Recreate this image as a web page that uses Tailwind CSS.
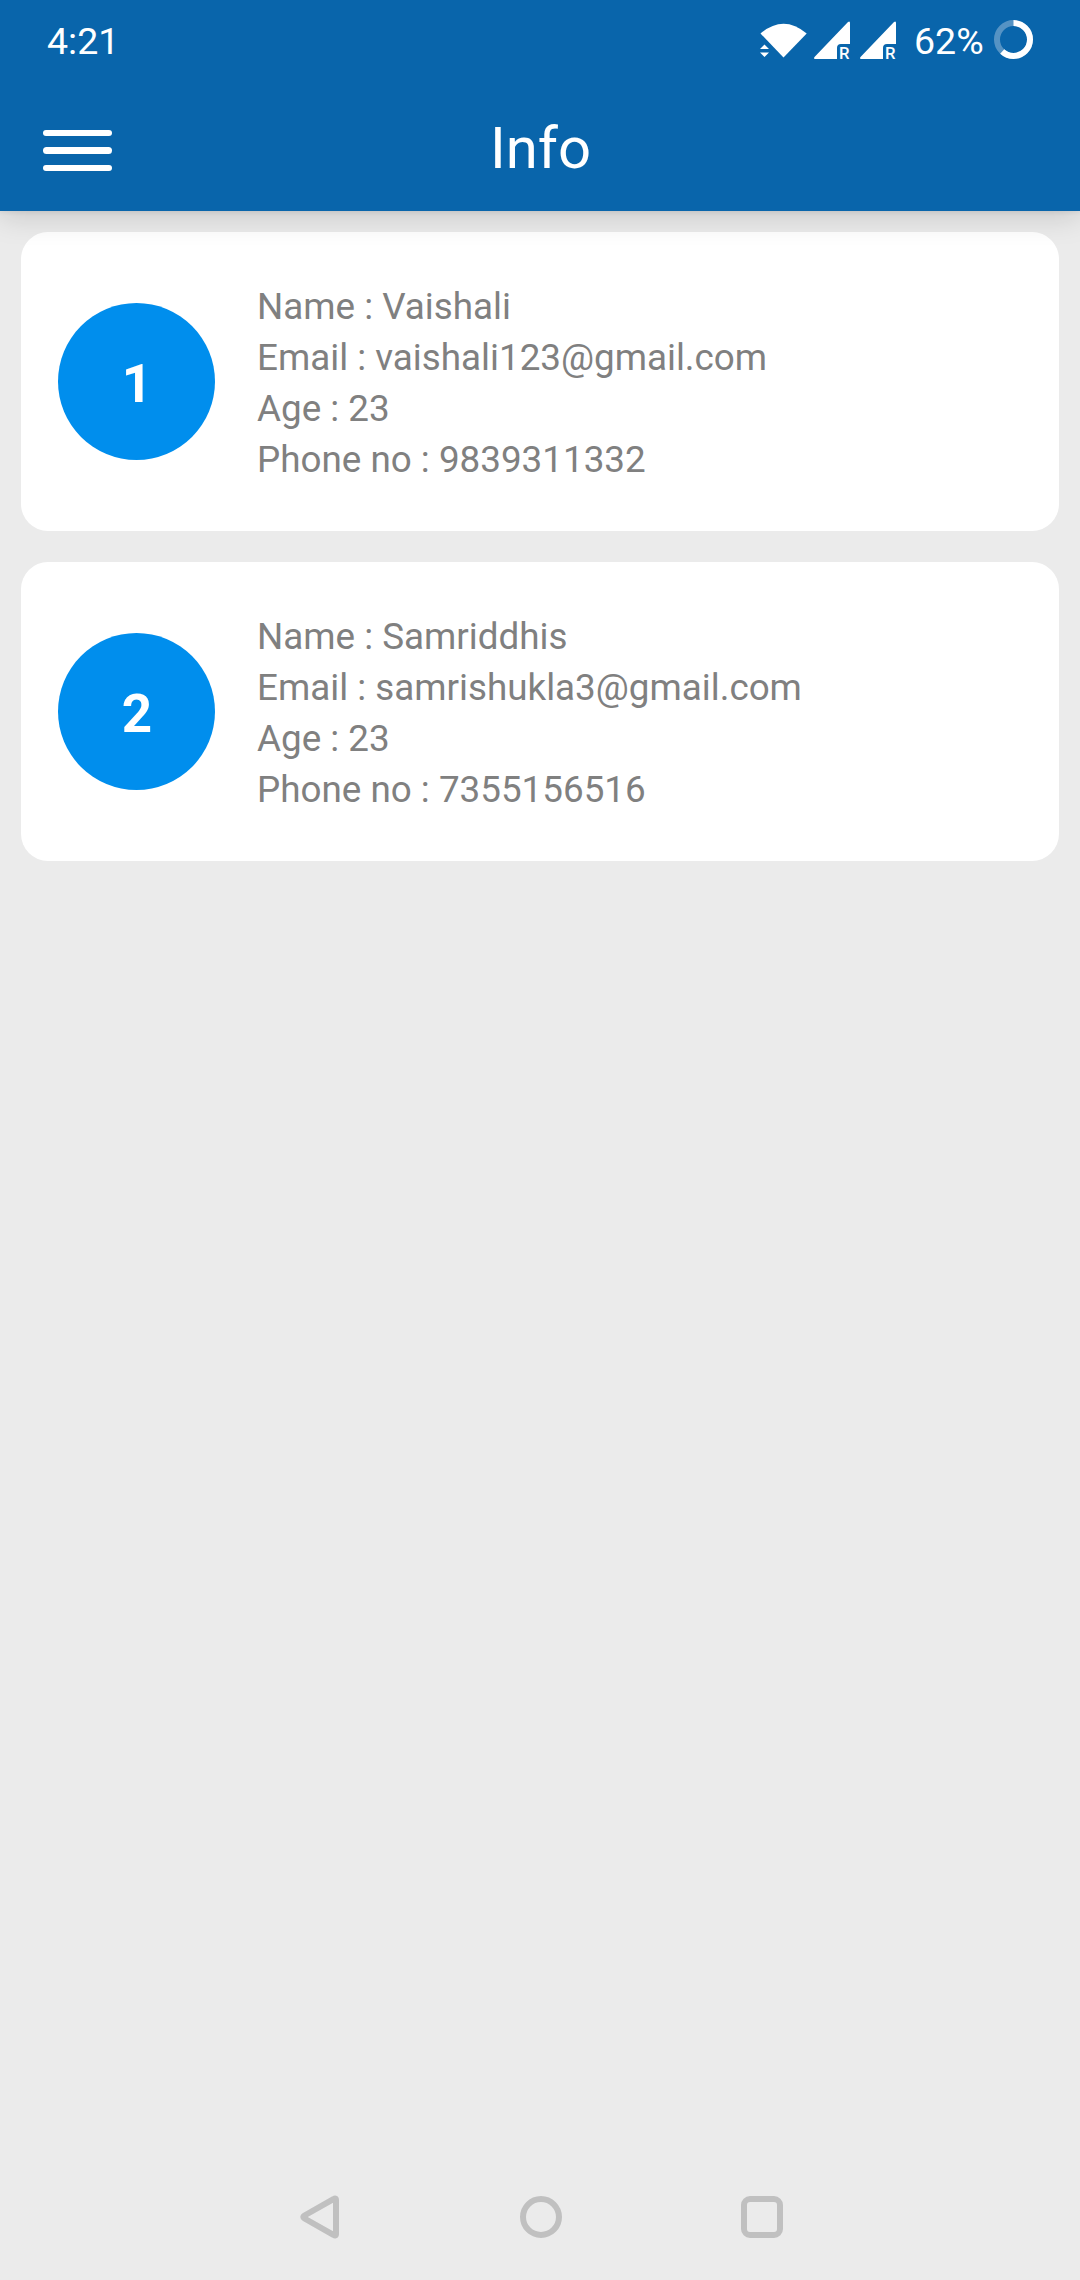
<!DOCTYPE html>
<html lang="en">
<head>
<meta charset="utf-8">
<title>Info</title>
<script src="https://cdn.jsdelivr.net/npm/@tailwindcss/browser@4"></script>
</head>
<body class="flex h-[2280px] w-[1080px] flex-col overflow-hidden bg-[#ebebeb] font-[Roboto,sans-serif]">
  <header class="relative z-10 flex h-[211px] shrink-0 flex-col bg-[#0965ab] text-white shadow-[0_1px_5px_rgba(0,0,0,0.08),0_6px_28px_rgba(0,0,0,0.15)]">
    <!-- Status bar -->
    <div class="flex h-20 justify-between pl-[47px] pr-[47px]">
      <span class="pt-[19px] text-[37.500px] leading-[45px]">4:21</span>
      <div class="flex">
        <svg class="h-20 w-[154px]" viewBox="760 0 154 80" fill="#fff">
          <path d="M760.500 33.500Q783.500 14 806.700 33.500L783.500 57.500Z"/>
          <path d="M760 49L764.500 44.500L769 49ZM760 52.500H769L764.500 57Z"/>
          <path d="M814.500 59Q813.500 58 814.500 57L848 22Q850 20.500 850 23V44H841Q837 44 837 48V59Z"/>
          <path d="M860.500 59Q859.500 58 860.500 57L894 22Q896 20.500 896 23V44H887Q883 44 883 48V59Z"/>
          <text x="839" y="58.700" font-family="Roboto" font-size="17" font-weight="500" textLength="10.500" lengthAdjust="spacingAndGlyphs">R</text>
          <text x="885" y="58.700" font-family="Roboto" font-size="17" font-weight="500" textLength="10.500" lengthAdjust="spacingAndGlyphs">R</text>
        </svg>
        <span class="w-[80px] pt-[19px] text-[37.500px] leading-[45px]">62%</span>
        <svg class="h-20 w-[39px]" viewBox="994 0 39 80" fill="none" stroke-width="6">
          <circle cx="1013.500" cy="39.500" r="16.500" stroke="#5593c4"/>
          <circle cx="1013.500" cy="39.500" r="16.500" stroke="#fff" pathLength="100" stroke-dasharray="62 38" transform="rotate(-90 1013.5 39.5)"/>
        </svg>
      </div>
    </div>
    <!-- App bar -->
    <div class="grid h-[131px] grid-cols-[1fr_auto_1fr] px-[43px]">
      <div class="flex flex-col gap-[11px] pt-[50px]">
        <span class="h-[6.300px] w-[69px] rounded-full bg-white"></span>
        <span class="h-[6.300px] w-[69px] rounded-full bg-white"></span>
        <span class="h-[6.300px] w-[69px] rounded-full bg-white"></span>
      </div>
      <h1 class="pl-px pt-[33px] text-[58px] leading-[70px]">Info</h1>
    </div>
  </header>

  <main class="flex flex-1 flex-col gap-[31px] px-[21px] pt-[21px]">
    <article class="flex h-[299px] items-center rounded-[27px] bg-white pl-[37px]">
      <div class="flex size-[157px] items-center justify-center rounded-full bg-[#008eed] pl-px pt-[5px] text-[53px] font-bold leading-none text-white">1</div>
      <div class="ml-[42px] pt-[2px] text-[36.800px] leading-[51px] text-[#808080]">
        <p>Name : Vaishali</p>
        <p>Email : vaishali123@gmail.com</p>
        <p>Age : 23</p>
        <p>Phone no : 9839311332</p>
      </div>
    </article>
    <article class="flex h-[299px] items-center rounded-[27px] bg-white pl-[37px]">
      <div class="flex size-[157px] items-center justify-center rounded-full bg-[#008eed] pl-px pt-[5px] text-[53px] font-bold leading-none text-white">2</div>
      <div class="ml-[42px] pt-[2px] text-[36.800px] leading-[51px] text-[#808080]">
        <p>Name : Samriddhis</p>
        <p>Email : samrishukla3@gmail.com</p>
        <p>Age : 23</p>
        <p>Phone no : 7355156516</p>
      </div>
    </article>
  </main>

  <!-- System navigation -->
  <nav class="flex h-[126px] items-center justify-center gap-[177.500px] pl-[3px]">
    <svg class="h-[44px] w-[42px]" viewBox="299 2195 42 44" fill="none" stroke="#c0c0c0" stroke-width="6" stroke-linejoin="round"><path d="M333.400 2199.200Q336 2197.500 336 2200V2234Q336 2236.500 333.400 2234.800L304.500 2218.500Q302 2217 304.500 2215.500Z"/></svg>
    <svg class="h-[44px] w-[44px]" viewBox="518 2195 44 44" fill="none" stroke="#c0c0c0" stroke-width="6"><circle cx="540" cy="2217" r="18"/></svg>
    <svg class="h-[44px] w-[44px]" viewBox="740 2195 44 44" fill="none" stroke="#c0c0c0" stroke-width="6"><rect x="744" y="2199" width="36" height="36" rx="6"/></svg>
  </nav>
</body>
</html>
